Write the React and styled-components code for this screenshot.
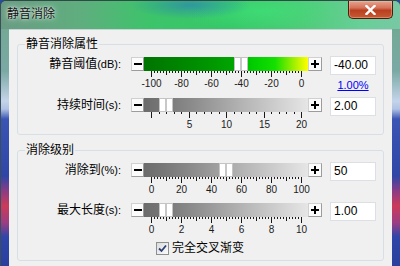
import React from 'react'
import styled, { createGlobalStyle } from 'styled-components'

const GlobalStyle = createGlobalStyle`
  html, body {
    margin: 0;
    padding: 0;
    overflow: hidden;
    background: #2a4c9c;
  }
`

const cjk = `"Liberation Sans", "Noto Sans CJK SC", sans-serif`

const Window = styled.div`
  width: 400px;
  height: 266px;
  display: grid;
  grid-template-columns: 8px 1fr 8px;
  grid-template-rows: 28px 1fr;
  box-sizing: border-box;
  border-top: 1px solid #2f4a45;
  border-left: 1px solid #3a4f5a;
  border-radius: 6px 6px 0 0;
  overflow: hidden;
  background: linear-gradient(
    to bottom,
    #6fa88c 0px,
    #7aa9a4 70px,
    #c4d4ea 100px,
    #b0c2e4 108px,
    #3b55b4 118px,
    #2f46a6 175px,
    #8a3c86 190px,
    #cc3a5a 205px,
    #9a3e84 222px,
    #3046a8 236px,
    #2a3f9c 266px
  );
`

const TitleBar = styled.div`
  grid-column: 1 / -1;
  display: flex;
  justify-content: space-between;
  align-items: flex-start;
  padding: 0 7px 0 6px;
  background:
    radial-gradient(ellipse 60px 14px at 190px 4px, rgba(40, 110, 200, 0.55), transparent),
    radial-gradient(ellipse 80px 20px at 260px 10px, rgba(60, 230, 120, 0.6), transparent),
    linear-gradient(
      to right,
      #6a9c84 0px,
      #5fae7e 80px,
      #3cc46a 150px,
      #36c868 230px,
      #4ecb78 300px,
      #68cf98 360px,
      #78c8a4 400px
    );
`

const Title = styled.span`
  margin-top: 5px;
  font: 12px/16px ${cjk};
  color: #111;
  text-shadow: 0 0 6px rgba(255, 255, 255, 0.9), 0 0 2px rgba(255, 255, 255, 0.8);
`

const CloseButton = styled.div`
  width: 45px;
  height: 18px;
  box-sizing: border-box;
  display: flex;
  align-items: center;
  justify-content: center;
  border: 1px solid #4c1c12;
  border-top: none;
  border-radius: 0 0 5px 5px;
  background: linear-gradient(to bottom, #e6a48e 0%, #d5725a 40%, #b8401f 55%, #c65a36 100%);
  box-shadow: inset 0 0 0 1px rgba(255, 200, 180, 0.4);
`

const Client = styled.div`
  grid-column: 2;
  background: #f0f0f0;
  border-top: 1px solid #c9d4d8;
  padding: 7px 8px 0 8px;
  display: flex;
  flex-direction: column;
  gap: 8px;
  box-sizing: border-box;
`

const Group = styled.fieldset`
  margin: 0;
  padding: ${(p) => p.$pad};
  border: 1px solid #d5dfe5;
  border-radius: 3px;
  min-width: 0;
`

const Legend = styled.legend`
  margin-left: 7px;
  padding: 0 1px;
  font: 12px/14px ${cjk};
  color: #000;
`

const Row = styled.div`
  display: grid;
  grid-template-columns: 103px 191px 46px;
  column-gap: 10px;
  height: ${(p) => p.$h}px;
  & > :nth-child(3) {
    margin-left: -4px;
  }
`

const Label = styled.div`
  text-align: right;
  font: 12px/14px ${cjk};
  color: #000;
  margin-top: 1px;
  white-space: nowrap;
`

const Unit = styled.span`
  font-size: 11px;
`

const SliderBlock = styled.div`
  display: flex;
  flex-direction: column;
  padding-top: 1px;
`

const Slider = styled.div`
  display: flex;
  height: 14px;
`

const StepButton = styled.div`
  width: ${(p) => p.$w}px;
  height: 14px;
  box-sizing: border-box;
  border: 1px solid #b4b4b4;
  border-color: #d0d0d0 #9c9c9c #9c9c9c #d0d0d0;
  background: #fbfbfb;
  display: flex;
  align-items: center;
  justify-content: center;
`

const Track = styled.div`
  flex: 1;
  position: relative;
  background: ${(p) =>
    p.$kind === 'green'
      ? 'linear-gradient(to right, #007400 0%, #008c00 30%, #00a600 55%, #00cc00 66%, #14e000 80%, #a8f000 92%, #ffff00 100%)'
      : 'linear-gradient(to right, #6c6c6c 0%, #777 12%, #8c8c8c 30%, #b4b4b4 60%, #e6e6e6 100%)'};
`

const Thumb = styled.div`
  position: absolute;
  top: 0;
  width: 14px;
  height: 14px;
  box-sizing: border-box;
  border: 1px solid #c4c4c4;
  background: linear-gradient(to right, #fff 0 45%, #c8c8c8 45% 55%, #fff 55% 100%);
`

const ValueBlock = styled.div`
  display: flex;
  flex-direction: column;
  align-items: center;
`

const EditBox = styled.div`
  width: 46px;
  height: 19px;
  box-sizing: border-box;
  border: 1px solid #dcdfe3;
  background: #fff;
  padding: 0 3px;
  font: 12px/17px "Liberation Sans", sans-serif;
  color: #000;
`

const PercentLink = styled.a`
  margin-top: 4px;
  font: 11px/12px "Liberation Sans", sans-serif;
  color: #0000ff;
  text-decoration: underline;
`

const CheckRow = styled.div`
  display: flex;
  align-items: center;
  gap: 3px;
  margin-left: 138px;
  height: 14px;
`

const CheckBox = styled.div`
  width: 13px;
  height: 13px;
  box-sizing: border-box;
  border: 1px solid #8e8f8f;
  background: linear-gradient(135deg, #dcdcdc, #fbfbfb);
  display: flex;
  align-items: center;
  justify-content: center;
`

const CheckLabel = styled.span`
  font: 12px/14px ${cjk};
  color: #000;
`

const Scale = ({ min, max, minor, medium, major, skipZeroLabel }) => {
  const steps = Math.round((max - min) / minor)
  const pos = (v) => 20 + ((v - min) / (max - min)) * 150
  const isMult = (v, m) => m && Math.abs((v - min) / m - Math.round((v - min) / m)) < 1e-6
  const ticks = []
  const labels = []
  for (let i = 0; i <= steps; i++) {
    const v = min + i * minor
    const x = Math.round(pos(v))
    let h = 2
    if (isMult(v, major)) h = 6
    else if (isMult(v, medium)) h = 4
    ticks.push(<rect key={i} x={x} y={0} width={1} height={h} fill="#1a1a1a" />)
    if (isMult(v, major) && !(skipZeroLabel && i === 0)) {
      labels.push(
        <text key={'l' + i} x={x + 0.5} y={16} textAnchor="middle" fontSize="10" fontFamily="Liberation Sans, sans-serif" fill="#1c1c1c">
          {Math.round(v * 100) / 100}
        </text>
      )
    }
  }
  return (
    <svg width="191" height="18" style={{ display: 'block' }}>
      {ticks}
      {labels}
    </svg>
  )
}

const SliderRow = ({ h, label, unit, min, max, value, kind, text, link, ...scale }) => {
  const frac = (value - min) / (max - min)
  return (
    <Row $h={h}>
      <Label>
        {label}
        <Unit>{unit}</Unit>
      </Label>
      <SliderBlock>
        <Slider>
          <StepButton $w={13}>
            <svg width="8" height="2"><rect width="8" height="2" fill="#000" /></svg>
          </StepButton>
          <Track $kind={kind}>
            <Thumb style={{ left: Math.round(frac * 150) }} />
          </Track>
          <StepButton $w={14}>
            <svg width="8" height="8">
              <rect x="0" y="3" width="8" height="2" fill="#000" />
              <rect x="3" y="0" width="2" height="8" fill="#000" />
            </svg>
          </StepButton>
        </Slider>
        <Scale min={min} max={max} {...scale} />
      </SliderBlock>
      <ValueBlock>
        <EditBox>{text}</EditBox>
        {link && <PercentLink href="#">{link}</PercentLink>}
      </ValueBlock>
    </Row>
  )
}

export default function App() {
  return (
    <>
      <GlobalStyle />
      <Window>
        <TitleBar>
          <Title>静音消除</Title>
          <CloseButton>
            <svg width="11" height="10" viewBox="0 0 11 10">
              <path d="M1.5 1 L9.5 9 M9.5 1 L1.5 9" stroke="#fff" strokeWidth="2.4" strokeLinecap="square" />
            </svg>
          </CloseButton>
        </TitleBar>
        <Client>
          <Group $pad="5px 0 0 0">
            <Legend>静音消除属性</Legend>
            <SliderRow h={41} label="静音阈值" unit="(dB):" min={-100} max={0} value={-40} kind="green"
              minor={2} medium={10} major={20} text="-40.00" link="1.00%" />
            <SliderRow h={37} label="持续时间" unit="(s):" min={0} max={20} value={2} kind="grey"
              minor={1} major={5} skipZeroLabel text="2.00" />
          </Group>
          <Group $pad="5px 0 5px 0">
            <Legend>消除级别</Legend>
            <SliderRow h={40} label="消除到" unit="(%):" min={0} max={100} value={50} kind="grey"
              minor={2} medium={10} major={20} text="50" />
            <SliderRow h={39} label="最大长度" unit="(s):" min={0} max={10} value={1} kind="grey"
              minor={0.2} medium={1} major={2} text="1.00" />
            <CheckRow>
              <CheckBox>
                <svg width="9" height="9" viewBox="0 0 9 9">
                  <path d="M1 4.5 L3.5 7 L8 1.5" fill="none" stroke="#2c3f76" strokeWidth="1.8" />
                </svg>
              </CheckBox>
              <CheckLabel>完全交叉渐变</CheckLabel>
            </CheckRow>
          </Group>
        </Client>
      </Window>
    </>
  )
}
